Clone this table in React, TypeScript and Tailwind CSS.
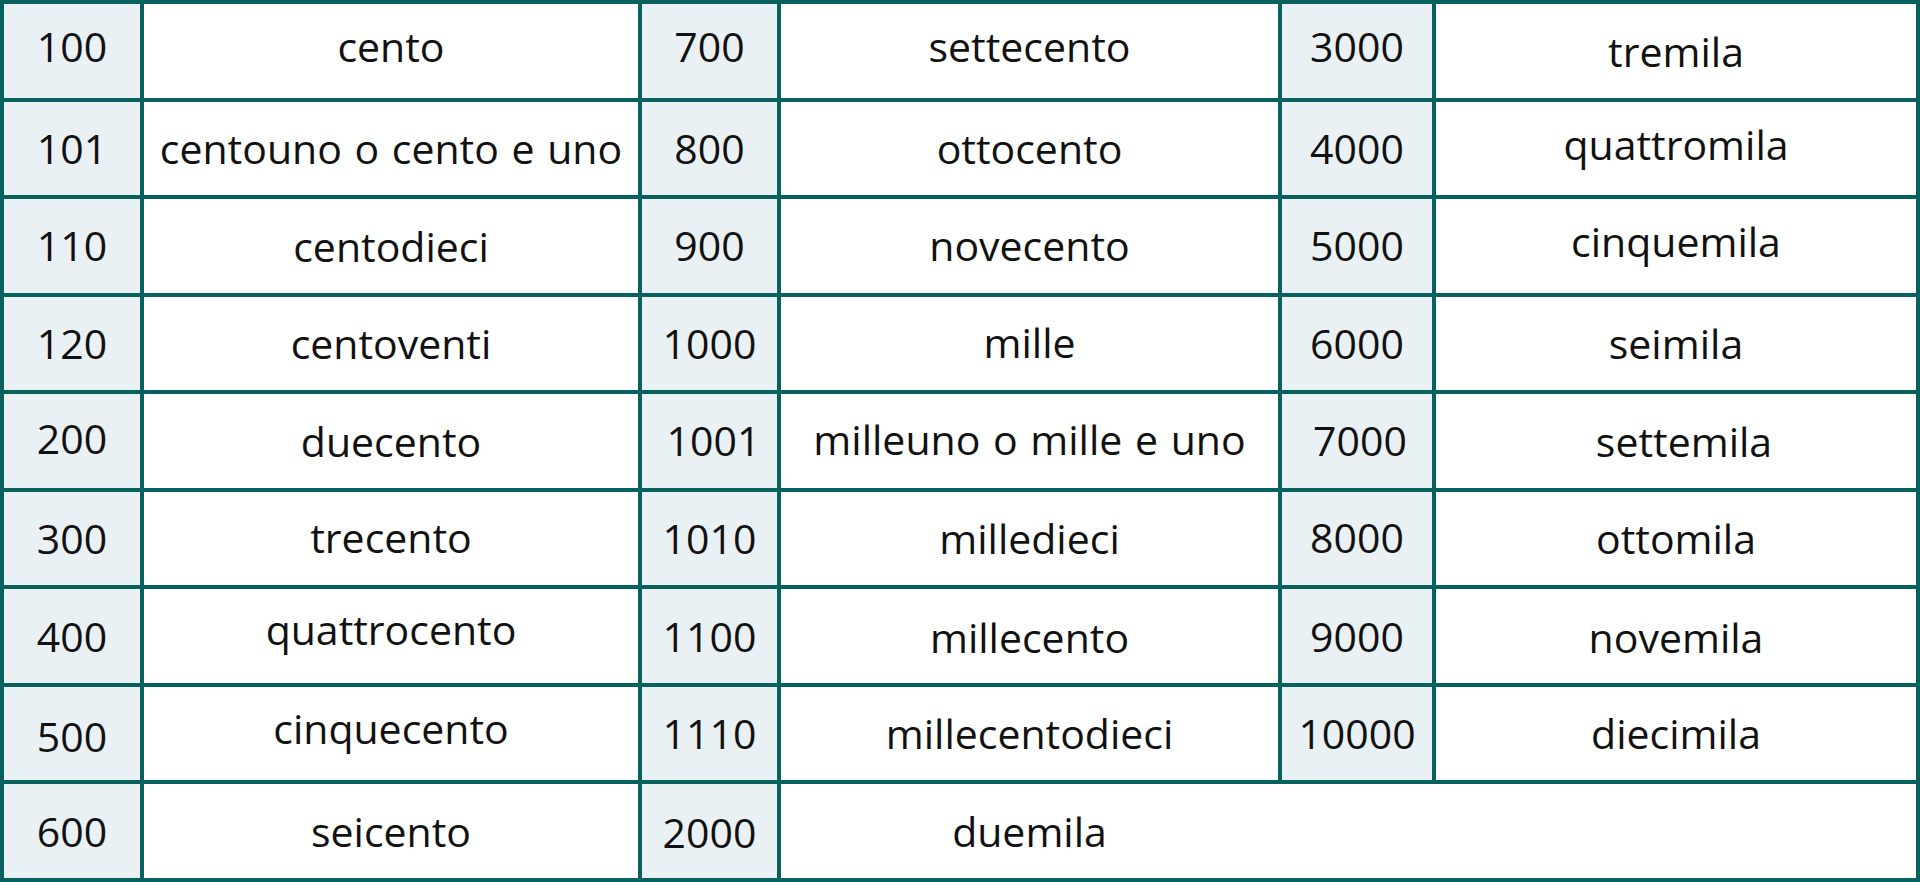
import React from "react";

// [text, extra classes] — small paddings nudge text the way the source image has it
type Cell = [string, string?];

const rows: Cell[][] = [
  [["100", "pb-[9px]"], ["cento", "pb-[9px]"], ["700", "pb-[9px]"], ["settecento", "pb-[9px]"], ["3000", "pb-[9px]"], ["tremila", "pt-[2px]"]],
  [["101"], ["centouno o cento e uno"], ["800"], ["ottocento"], ["4000"], ["quattromila", "pb-[8px]"]],
  [["110"], ["centodieci", "pt-[2px]"], ["900"], ["novecento"], ["5000"], ["cinquemila", "pb-[9px]"]],
  [["120"], ["centoventi"], ["1000"], ["mille", "pb-[2px]"], ["6000"], ["seimila"]],
  [["200", "pb-[4px]"], ["duecento", "pt-[2px]"], ["1001", "pl-[8px]"], ["milleuno o mille e uno", "pb-[2px]"], ["7000", "pl-[6px]"], ["settemila", "pt-[2px] pl-[16px]"]],
  [["300"], ["trecento", "pb-[2px]"], ["1010"], ["milledieci"], ["8000", "pb-[3px]"], ["ottomila"]],
  [["400"], ["quattrocento", "pb-[14px]"], ["1100"], ["millecento", "pt-[2px]"], ["9000"], ["novemila", "pt-[2px]"]],
  [["500", "pt-[5px]"], ["cinquecento", "pb-[10px]"], ["1110"], ["millecentodieci"], ["10000"], ["diecimila"]],
  [["600"], ["seicento"], ["2000", "pt-[2px]"], ["duemila"]],
];

const NumCell: React.FC<{ cell: Cell }> = ({ cell }) => (
  <div className={`flex items-center justify-center bg-[#eaf1f4] ${cell[1] || ""}`}>{cell[0]}</div>
);

const WordCell: React.FC<{ cell: Cell }> = ({ cell }) => (
  <div className={`flex items-center justify-center bg-white [word-spacing:2px] ${cell[1] || ""}`}>{cell[0]}</div>
);

const App: React.FC = () => {
  return (
    <div
      className="grid h-[882px] w-[1920px] grid-cols-[136px_494px_135px_497px_150px_480px] grid-rows-9 gap-[4px] bg-[#07625f] p-[4px] text-[41px] leading-none text-[#111]"
      style={{ fontFamily: '"Open Sans", sans-serif' }}
    >
      {rows.map((r, i) =>
        r.length === 6 ? (
          <React.Fragment key={i}>
            <NumCell cell={r[0]} />
            <WordCell cell={r[1]} />
            <NumCell cell={r[2]} />
            <WordCell cell={r[3]} />
            <NumCell cell={r[4]} />
            <WordCell cell={r[5]} />
          </React.Fragment>
        ) : (
          <React.Fragment key={i}>
            <NumCell cell={r[0]} />
            <WordCell cell={r[1]} />
            <NumCell cell={r[2]} />
            <div className="col-span-3 flex items-center bg-white">
              <div className="w-[497px] text-center">{r[3][0]}</div>
            </div>
          </React.Fragment>
        )
      )}
    </div>
  );
};

export default App;
